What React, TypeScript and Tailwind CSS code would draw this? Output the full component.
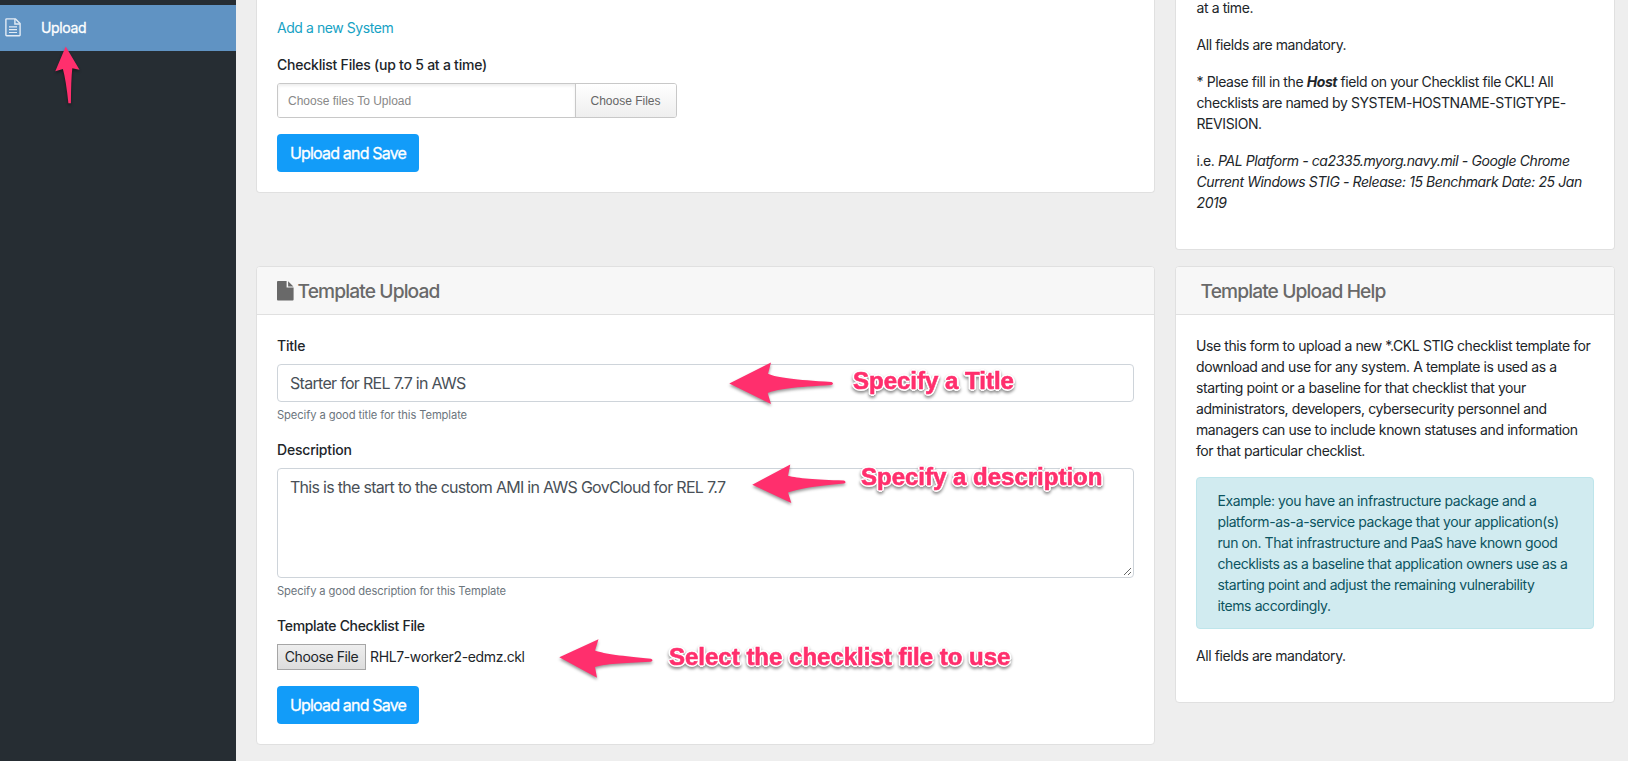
import type { ReactNode } from "react";

function SidebarDocIcon() {
  return (
    <svg width="16" height="19" viewBox="0 0 16 19" fill="none" stroke="#e3ecf5" strokeWidth="1.4">
      <path d="M1.6 0.9h8.9l4.6 4.6v11.6a.7.7 0 0 1-.7.7H1.6a.7.7 0 0 1-.7-.7V1.6a.7.7 0 0 1 .7-.7z" strokeLinejoin="round" />
      <path d="M9.9 1v5h5" />
      <path d="M4 8.9h8M4 11.7h8M4 14.5h8" strokeWidth="1.2" />
    </svg>
  );
}

function FileIcon() {
  return (
    <svg width="17" height="20" viewBox="0 0 17 20" fill="#696969">
      <path d="M0.9 0H9.6V6.6H16.6V18.5a0.9 0.9 0 0 1-.9.9H.9a.9.9 0 0 1-.9-.9V.9A.9.9 0 0 1 .9 0z" />
      <path d="M11.1.2 16.4 5.4H11.1z" />
    </svg>
  );
}

function PageText({ children }: { children: ReactNode }) {
  return <p className="mb-4 whitespace-nowrap tracking-[-0.41px]">{children}</p>;
}

function CardHeader({ children }: { children: ReactNode }) {
  return (
    <div className="flex h-[48px] items-center rounded-t-[3px] border-b border-[#e0e0e0] bg-[#f7f7f7] px-5 text-[19.2px] font-medium text-[#696969]">
      {children}
    </div>
  );
}

function PrimaryButton() {
  return (
    <button className="block h-[38px] w-[142px] rounded bg-[#129cf9] text-center text-[16px] leading-[38px] tracking-[-0.81px] text-white [-webkit-text-stroke:0.3px_white]">
      Upload and Save
    </button>
  );
}

function Label({ children, className }: { children: ReactNode; className: string }) {
  return <label className={`mb-2 block h-[21px] font-medium ${className}`}>{children}</label>;
}

function Callout({ children, className }: { children: ReactNode; className: string }) {
  return (
    <span
      className={`absolute z-10 whitespace-nowrap font-['Liberation_Sans',sans-serif] text-[24px] font-bold leading-[28px] text-[#ff2f6d] [-webkit-text-stroke:0.6px_#ff2f6d] [filter:drop-shadow(0_2px_1.5px_rgba(0,0,0,0.45))] [text-shadow:2px_0_0_#fff,-2px_0_0_#fff,0_2px_0_#fff,0_-2px_0_#fff,1.4px_1.4px_0_#fff,-1.4px_1.4px_0_#fff,1.4px_-1.4px_0_#fff,-1.4px_-1.4px_0_#fff] ${className}`}
    >
      {children}
    </span>
  );
}

function Arrows() {
  return (
    <svg
      className="pointer-events-none absolute left-0 top-0 z-10 [filter:drop-shadow(0_2px_1.5px_rgba(0,0,0,0.4))]"
      width="1628"
      height="761"
      viewBox="0 0 1628 761"
      fill="#ff2f6d"
    >
      <path d="M65.7 46.5 79.5 69.7 72.3 68.3Q71 80 70.9 103.3H68.4Q66 80 62.9 68.9L55.3 71.3z" />
      <path d="M729.3 383.5 771 362.5 768 373.7C778 378 795 379.5 831.5 382Q834.5 383.5 831.5 385C795 387 778 389 767.7 393L771 404z" />
      <path d="M752.3 484.8 790.3 464.5 788 475.8C798 478.5 815 479.5 844 480.6Q847 482.3 844 483.6C815 486 798 489 788 492.6L791.3 503z" />
      <path d="M559.3 657.3 598.5 639.3 595 650.5C605 654 622 656 651 658.8Q654 660.5 651 661.8C622 663 605 664 595 667L597 677.8z" />
    </svg>
  );
}

export default function App() {
  return (
    <div className="relative flex h-[761px] w-[1628px] overflow-hidden bg-[#eeeeee] font-['Inter',sans-serif] text-[14px] leading-[21px] text-[#212529]">
      <aside className="w-[236px] shrink-0 bg-[#262d33] pt-[5px]">
        <a className="flex h-[46px] items-center bg-[#6093c3] pb-[2px] pl-[5px] text-white">
          <SidebarDocIcon />
          <span className="ml-[20px] tracking-[-0.35px] [-webkit-text-stroke:0.3px_white]">Upload</span>
        </a>
      </aside>

      <main className="flex gap-[20px] pl-5">
        <div className="flex w-[899px] flex-col">
          <section className="h-[193px] rounded-b border border-t-0 border-[#e0e0e0] bg-white px-5 pt-[17px]">
            <a className="mb-4 block tracking-[-0.43px] text-[#17a2c4]">Add a new System</a>
            <Label className="tracking-[-0.23px]">Checklist Files (up to 5 at a time)</Label>
            <div className="mb-4 flex h-[35px] w-[400px] overflow-hidden rounded-[3px] border border-[#c8c8c8] text-[12px] leading-[34px]">
              <div className="w-[297px] bg-white pl-[10px] font-['Liberation_Sans',sans-serif] text-[#888888] shadow-[inset_0_2px_3px_rgba(0,0,0,0.07)]">
                Choose files To Upload
              </div>
              <div className="flex-1 border-l border-[#c8c8c8] bg-linear-to-b from-white to-[#eeeeee] pr-px text-center font-['Liberation_Sans',sans-serif] text-[#666666]">
                Choose Files
              </div>
            </div>
            <PrimaryButton />
          </section>

          <section className="mt-[73px] h-[479px] rounded border border-[#e0e0e0] bg-white">
            <CardHeader>
              <FileIcon />
              <span className="ml-[3.5px] pt-[2px] tracking-[-0.87px]">Template Upload</span>
            </CardHeader>
            <div className="px-5 pt-5">
              <Label className="tracking-[-0.2px]">Title</Label>
              <div className="h-[38px] rounded border border-[#ced4da] px-3 text-[16px] leading-[37px] tracking-[-0.7px] text-[#495057]">
                Starter for REL 7.7 in AWS
              </div>
              <small className="mb-[15px] mt-[5px] block h-[17px] text-[11.2px] leading-[17px] tracking-[-0.1px] text-[#6c757d]">
                Specify a good title for this Template
              </small>
              <Label className="tracking-[-0.2px]">Description</Label>
              <div className="flex h-[110px] items-end justify-between rounded border border-[#ced4da] pl-3 text-[16px] leading-6 tracking-[-0.71px] text-[#495057]">
                <span className="self-start pt-[6px]">This is the start to the custom AMI in AWS GovCloud for REL 7.7</span>
                <svg width="9" height="9" viewBox="0 0 9 9" className="mb-px mr-px" stroke="#555" strokeWidth="0.9">
                  <path d="M1 8 8 1M5 8 8 5" />
                </svg>
              </div>
              <small className="mb-[15px] mt-[5px] block h-[17px] text-[11.2px] leading-[17px] tracking-[-0.11px] text-[#6c757d]">
                Specify a good description for this Template
              </small>
              <Label className="tracking-[-0.31px]">Template Checklist File</Label>
              <div className="mb-4 flex h-[26px] items-center">
                <span className="h-[26px] w-[89px] border border-[#a6a6a6] bg-linear-to-b from-[#eeeeee] to-[#dddddd] text-center leading-[24px] tracking-[-0.4px]">
                  Choose File
                </span>
                <span className="ml-[4px] pb-px tracking-[-0.37px]">RHL7-worker2-edmz.ckl</span>
              </div>
              <PrimaryButton />
            </div>
          </section>
        </div>

        <div className="flex w-[440px] flex-col">
          <section className="-mt-[3px] h-[253px] rounded-b border border-t-0 border-[#e0e0e0] bg-white px-[20.5px]">
            <PageText>at a time.</PageText>
            <PageText>All fields are mandatory.</PageText>
            <PageText>
              * Please fill in the <b><i>Host</i></b> field on your Checklist file CKL! All
              <br />
              checklists are named by SYSTEM-HOSTNAME-STIGTYPE-
              <br />
              REVISION.
            </PageText>
            <PageText>
              i.e.{" "}
              <i>
                PAL Platform - ca2335.myorg.navy.mil - Google Chrome
                <br />
                Current Windows STIG - Release: 15 Benchmark Date: 25 Jan
                <br />
                2019
              </i>
            </PageText>
          </section>

          <section className="mt-[16px] h-[437px] rounded border border-[#e0e0e0] bg-white">
            <CardHeader>
              <span className="ml-[4.5px] pt-[2px] tracking-[-0.88px]">Template Upload Help</span>
            </CardHeader>
            <div className="px-5 pt-5">
              <PageText>
                Use this form to upload a new *.CKL STIG checklist template for
                <br />
                download and use for any system. A template is used as a
                <br />
                starting point or a baseline for that checklist that your
                <br />
                administrators, developers, cybersecurity personnel and
                <br />
                managers can use to include known statuses and information
                <br />
                for that particular checklist.
              </PageText>
              <div className="mb-4 h-[152px] whitespace-nowrap rounded border border-[#bee5eb] bg-[#d1ebf0] px-[20.5px] py-3 tracking-[-0.41px] text-[#0c5460]">
                Example: you have an infrastructure package and a
                <br />
                platform-as-a-service package that your application(s)
                <br />
                run on. That infrastructure and PaaS have known good
                <br />
                checklists as a baseline that application owners use as a
                <br />
                starting point and adjust the remaining vulnerability
                <br />
                items accordingly.
              </div>
              <PageText>All fields are mandatory.</PageText>
            </div>
          </section>
        </div>
      </main>

      <Arrows />
      <Callout className="left-[853px] top-[367px]">Specify a Title</Callout>
      <Callout className="left-[861px] top-[463px]">Specify a description</Callout>
      <Callout className="left-[669px] top-[643px]">Select the checklist file to use</Callout>
    </div>
  );
}
